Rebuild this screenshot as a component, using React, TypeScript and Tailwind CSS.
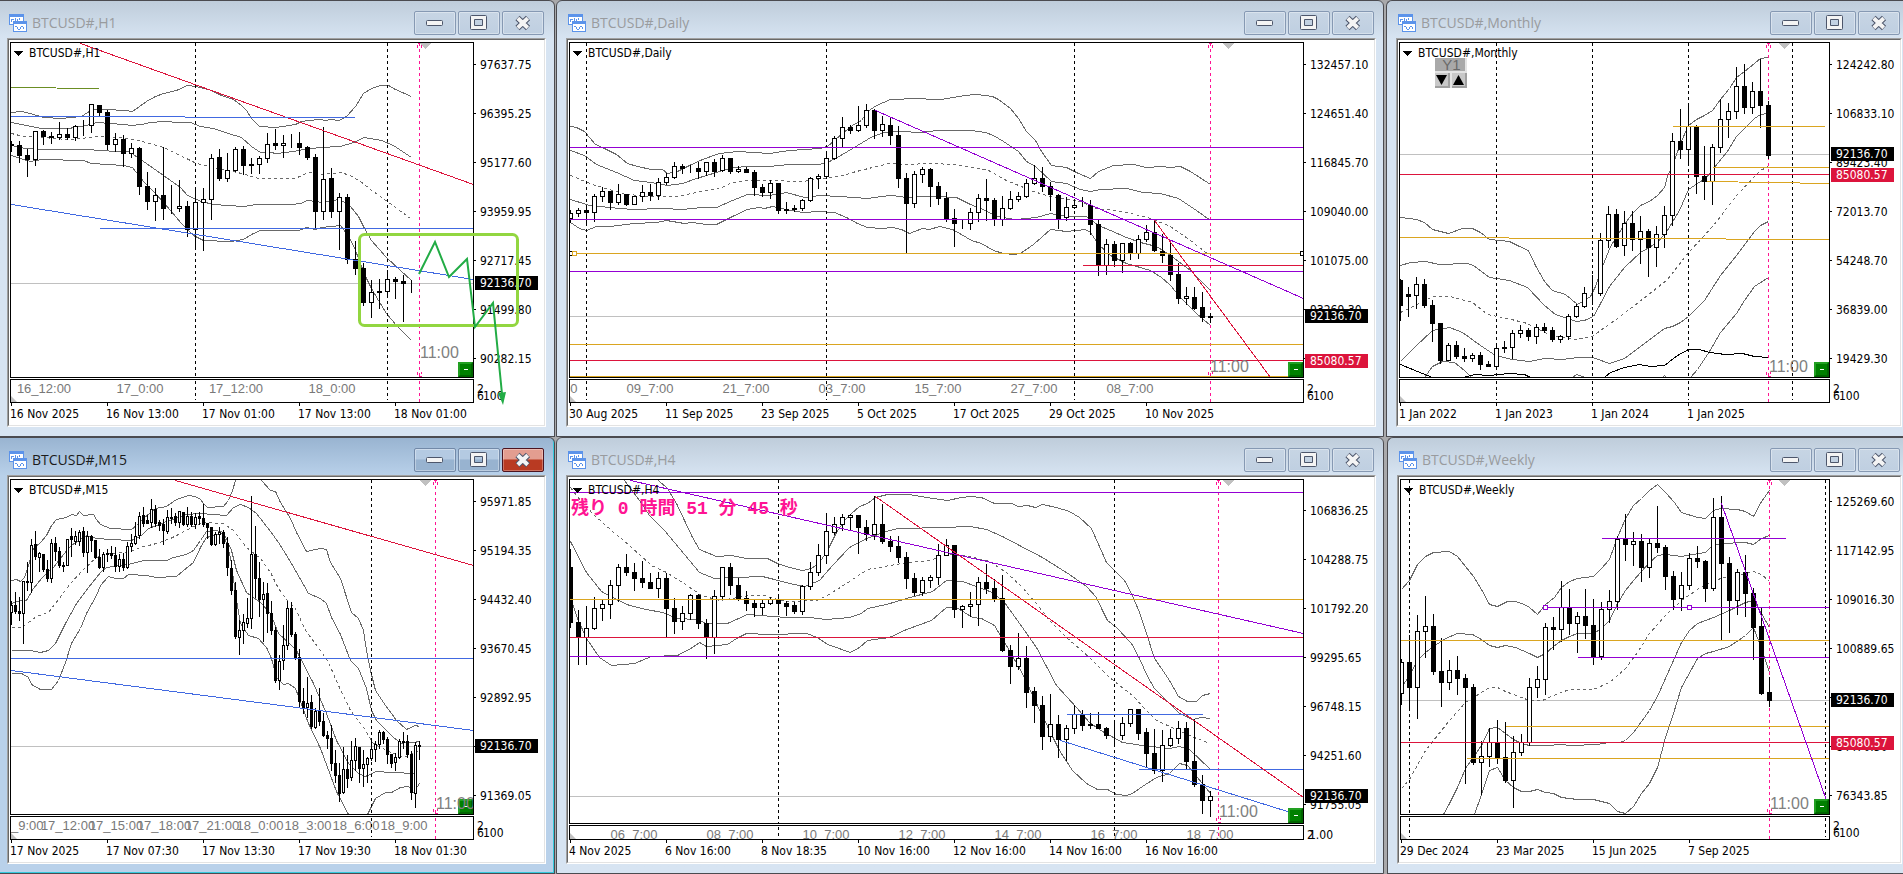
import React from "react";

// kind (1 = hollow, 0 = filled), body top, body bottom, high, low
type Candle = [number, number, number, number, number];

interface Line {
  color: string;
  from: [number, number];
  to: [number, number];
}

interface Chart {
  title: string;
  left: number;
  bottom: number;
  step: number;
  candles: Candle[];
  bands: string[];
  mid: string;
  extra?: string[];
  lines: Line[];
  price: number;
  days: number[];
  now: number;
  shift: number;
  clock: [number, number];
  handles?: [number, number, string][];
  axis: string[];
  level?: number;
  times: string[];
  hours: string[];
}

const PURPLE = "#9400d3";
const GOLD = "#daa520";
const RED = "#dc143c";
const BLUE = "#4169e1";
const OLIVE = "#6b8e23";
const PINK = "#ff1493";

// chart data is kept in thirds of a pixel, measured from the window's corner
const TOP = 129;

const flat = (color: string, y: number, from = 0, to = 2400): Line => ({ color, from: [from, y], to: [to, y] });

const h1: Chart = {
  title: "BTCUSD#,H1",
  left: 33,
  bottom: 1131,
  step: 8,
  candles: [
    [0, 432, 437, 425, 453], [0, 436, 467, 423, 488], [0, 466, 479, 449, 530], [1, 395, 479, 395, 497],
    [0, 393, 410, 390, 434], [0, 408, 412, 397, 431], [1, 403, 413, 366, 418], [0, 403, 413, 385, 419],
    [1, 379, 413, 375, 422], [0, 376, 376, 361, 407], [1, 313, 376, 313, 398], [0, 316, 338, 316, 347],
    [0, 336, 434, 332, 449], [1, 418, 434, 399, 455], [0, 417, 461, 405, 498], [1, 445, 461, 430, 473],
    [0, 444, 559, 441, 584], [0, 559, 605, 516, 627], [1, 586, 605, 564, 660], [0, 586, 626, 441, 657],
    [0, 626, 626, 555, 640], [1, 619, 626, 540, 635], [0, 619, 689, 603, 708], [1, 607, 689, 570, 748],
    [1, 598, 607, 564, 752], [1, 475, 599, 462, 659], [0, 472, 536, 447, 542], [1, 511, 536, 459, 545],
    [1, 448, 512, 441, 515], [0, 447, 497, 438, 524], [0, 493, 496, 474, 521], [1, 475, 494, 468, 521],
    [1, 433, 476, 401, 486], [0, 430, 437, 387, 449], [1, 430, 437, 405, 473], [0, 430, 430, 402, 443],
    [0, 430, 443, 396, 464], [0, 441, 473, 438, 479], [0, 472, 635, 462, 681], [1, 538, 635, 381, 659],
    [0, 535, 635, 506, 653], [1, 592, 635, 579, 747], [0, 592, 779, 583, 791], [0, 777, 806, 723, 822],
    [0, 804, 908, 789, 917], [1, 877, 908, 841, 953], [0, 874, 878, 837, 926], [1, 838, 875, 812, 888],
    [0, 837, 845, 833, 896], [0, 844, 851, 825, 965], [0, 850, 850, 842, 878],
  ],
  bands: [
    "33,337 65,334 90,340 130,351 185,355 215,353 245,350 262,336 280,329 320,327 375,331 398,333 418,320 440,303 465,290 490,280 530,272 563,256 590,260 635,270 665,285 700,299 725,315 740,330 755,355 778,379 825,382 868,376 885,373 905,365 925,360 960,358 975,361 990,358 1018,361 1042,345 1065,320 1090,281 1115,264 1140,256 1165,257 1185,268 1233,288",
    "33,367 80,375 125,384 205,386 240,378 270,372 290,366 330,370 370,374 395,377 425,372 450,366 490,364 540,366 572,367 600,378 640,386 685,400 725,413 755,438 780,456 810,457 830,461 880,455 910,447 960,442 1020,440 1060,428 1093,411 1145,422 1180,436 1233,473",
    "33,436 75,446 130,449 260,449 350,454 385,455 400,462 440,490 490,527 540,563 563,585 605,603 640,612 730,620 770,614 870,613 905,610 920,602 950,603 965,606 1015,597 1030,604 1050,620 1075,650 1090,680 1115,720 1160,772 1200,812 1235,840",
    "33,465 60,474 90,485 125,479 250,482 275,491 370,496 398,503 430,545 465,580 510,630 545,670 580,705 610,720 690,725 730,718 755,702 780,690 860,691 895,692 920,683 945,688 965,682 1020,677 1040,700 1060,735 1080,790 1095,830 1115,865 1135,900 1160,940 1190,975 1233,1022",
  ],
  mid: "33,400 70,408 130,412 200,418 245,414 290,409 355,412 415,422 490,443 560,475 590,490 640,502 700,515 735,522 775,534 870,536 885,535 910,522 925,518 965,522 1020,516 1050,526 1080,545 1110,568 1140,588 1175,612 1230,655",
  lines: [
    { color: RED, from: [240, 129], to: [1420, 552] },
    { color: OLIVE, from: [33, 262], to: [297, 266] },
    { color: BLUE, from: [33, 349], to: [1065, 353] },
    flat(BLUE, 685, 297),
    { color: BLUE, from: [33, 613], to: [1420, 838] },
  ],
  price: 850,
  days: [587, 1163],
  now: 1258,
  shift: 1277,
  clock: [1260, 1075],
  axis: ["97637.75", "96395.25", "95177.60", "93959.95", "92717.45", "91499.80", "90282.15"],
  times: ["16 Nov 2025", "16 Nov 13:00", "17 Nov 01:00", "17 Nov 13:00", "18 Nov 01:00"],
  hours: ["16_12:00", "17_0:00", "17_12:00", "18_0:00"],
};

const daily: Chart = {
  title: "BTCUSD#,Daily",
  left: 42,
  bottom: 1131,
  step: 8,
  candles: [
    [1, 640, 655, 632, 667], [1, 631, 641, 624, 650], [0, 630, 638, 616, 670], [1, 589, 637, 583, 665],
    [1, 574, 589, 561, 604], [0, 573, 608, 573, 629], [1, 583, 608, 552, 613], [0, 583, 614, 583, 617],
    [1, 589, 613, 589, 613], [1, 577, 589, 557, 605], [0, 576, 587, 552, 602], [1, 547, 587, 534, 598],
    [1, 532, 547, 520, 552], [1, 500, 532, 488, 534], [0, 498, 506, 494, 520], [0, 506, 506, 497, 517],
    [0, 504, 515, 488, 534], [1, 487, 515, 487, 525], [0, 486, 513, 477, 528], [1, 475, 512, 465, 515],
    [0, 474, 515, 474, 520], [1, 508, 515, 499, 518], [0, 507, 517, 503, 518], [0, 516, 563, 511, 587],
    [0, 562, 578, 553, 590], [1, 549, 577, 540, 596], [0, 549, 632, 549, 641], [0, 628, 632, 607, 641],
    [0, 624, 629, 617, 633], [1, 601, 626, 598, 631], [1, 535, 601, 532, 605], [1, 529, 535, 524, 566],
    [1, 475, 529, 460, 536], [1, 415, 475, 408, 478], [1, 382, 415, 353, 443], [0, 381, 392, 376, 401],
    [1, 376, 392, 318, 395], [1, 331, 376, 312, 382], [0, 330, 392, 327, 416], [1, 373, 392, 349, 409],
    [0, 375, 407, 356, 434], [0, 405, 536, 378, 563], [0, 535, 611, 519, 760], [1, 523, 611, 514, 622],
    [1, 508, 523, 502, 548], [0, 507, 560, 504, 620], [0, 559, 596, 547, 614], [0, 595, 656, 576, 665],
    [0, 655, 671, 628, 738], [0, 671, 671, 661, 686], [1, 637, 671, 625, 689], [1, 595, 637, 583, 665],
    [0, 595, 601, 538, 662], [0, 601, 658, 595, 677], [1, 625, 658, 589, 677], [1, 598, 625, 574, 628],
    [1, 590, 598, 578, 604], [1, 550, 590, 538, 592], [1, 535, 550, 495, 552], [0, 535, 559, 501, 575],
    [0, 559, 584, 547, 632], [0, 585, 656, 583, 686], [1, 622, 652, 592, 662], [1, 616, 622, 598, 626],
    [0, 616, 616, 592, 620], [0, 615, 674, 600, 704], [0, 673, 796, 662, 825], [1, 733, 796, 717, 822],
    [0, 733, 782, 724, 798], [1, 731, 782, 731, 818], [0, 730, 761, 727, 777], [1, 718, 761, 706, 776],
    [1, 697, 718, 675, 725], [0, 697, 752, 660, 755], [0, 753, 767, 703, 788], [0, 766, 824, 724, 840],
    [0, 822, 896, 791, 911], [1, 889, 895, 861, 914], [0, 892, 926, 863, 928], [0, 922, 953, 876, 965],
    [0, 948, 952, 939, 968],
  ],
  bands: [
    "43,380 60,382 85,394 100,413 117,434 145,446 180,463 215,489 245,500 285,507 320,508 333,520 365,514 400,495 440,477 490,460 545,455 640,460 700,451 790,445 815,439 860,400 890,376 915,360 935,335 960,315 1003,298 1030,298 1060,295 1155,298 1225,285 1260,283 1310,288 1327,297 1362,326 1387,356 1412,393 1437,420 1457,455 1485,497 1532,502 1567,519 1602,535 1627,515 1672,497 1732,494 1772,501 1817,499 1842,502 1872,499 1902,515 1962,553",
    "43,450 85,465 120,493 180,518 235,541 285,548 335,556 380,549 420,535 480,518 530,503 580,499 640,498 700,494 790,492 820,484 860,462 890,446 920,428 950,410 985,398 1040,393 1090,397 1145,392 1245,391 1287,397 1312,405 1342,425 1387,455 1412,483 1437,500 1485,545 1532,550 1572,567 1602,574 1632,569 1712,565 1762,576 1812,580 1867,596 1922,630 1962,660",
    "43,598 100,617 160,623 230,628 320,624 380,628 440,622 480,621 530,601 575,584 640,585 690,578 745,592 790,585 850,590 935,596 1000,586 1035,588 1050,594 1085,588 1145,590 1200,593 1242,612 1287,632 1322,648 1377,658 1442,652 1482,641 1532,648 1592,650 1627,677 1662,692 1712,712 1752,727 1802,740 1842,765 1902,810 1962,872",
    "43,668 70,684 92,690 120,679 160,679 235,671 300,668 330,662 385,670 410,667 450,674 480,673 500,665 530,650 575,628 610,622 625,625 650,618 690,627 740,637 790,634 835,637 870,653 905,669 935,682 980,685 1010,683 1035,688 1060,699 1100,685 1120,688 1150,678 1190,689 1215,703 1245,720 1277,731 1312,750 1342,760 1372,764 1392,760 1432,733 1482,688 1532,695 1587,688 1604,697 1627,733 1662,765 1712,790 1782,812 1817,832 1842,855 1872,893 1922,940 1962,977",
  ],
  mid: "43,526 110,553 190,577 260,588 360,589 420,576 490,566 530,548 575,541 640,540 740,545 800,535 850,530 890,517 960,500 1000,490 1045,493 1130,490 1190,492 1242,502 1297,510 1352,540 1432,573 1492,592 1572,603 1622,625 1702,635 1782,655 1842,678 1902,720 1957,762",
  lines: [
    flat(PURPLE, 442),
    flat(PURPLE, 658),
    flat(GOLD, 760),
    flat(PURPLE, 814),
    flat(GOLD, 1033),
    flat(RED, 1081),
    flat(GOLD, 1130),
    flat(RED, 796, 1580),
    { color: PURPLE, from: [957, 330], to: [2242, 895] },
    { color: RED, from: [1796, 661], to: [2142, 1131] },
  ],
  price: 949,
  days: [92, 812, 1556],
  now: 1964,
  shift: 2017,
  clock: [1964, 1118],
  handles: [[44, 760, "#000"], [56, 760, GOLD], [2239, 760, "#000"]],
  axis: ["132457.10", "124651.40", "116845.70", "109040.00", "101075.00", "93269.30", "85463.60"],
  level: 1083,
  times: ["30 Aug 2025", "11 Sep 2025", "23 Sep 2025", "5 Oct 2025", "17 Oct 2025", "29 Oct 2025", "10 Nov 2025"],
  hours: ["28_7:00", "09_7:00", "21_7:00", "03_7:00", "15_7:00", "27_7:00", "08_7:00"],
};

const monthly: Chart = {
  title: "BTCUSD#,Monthly",
  left: 48,
  bottom: 1131,
  step: 8,
  candles: [
    [0, 840, 917, 837, 962], [0, 883, 889, 861, 950], [1, 853, 886, 831, 926], [0, 853, 916, 837, 923],
    [0, 915, 971, 900, 1025], [0, 969, 1082, 969, 1091], [1, 1037, 1081, 1029, 1081], [0, 1036, 1070, 1024, 1074],
    [0, 1069, 1076, 1045, 1085], [1, 1067, 1076, 1060, 1085], [0, 1066, 1093, 1056, 1109], [0, 1092, 1100, 1083, 1100],
    [1, 1046, 1099, 1032, 1104], [0, 1042, 1046, 1023, 1058], [1, 1000, 1043, 991, 1074], [1, 991, 1000, 976, 1013],
    [0, 990, 1010, 985, 1022], [1, 982, 1010, 974, 1031], [0, 981, 991, 969, 996], [0, 990, 1019, 982, 1025],
    [1, 1010, 1018, 1005, 1028], [1, 949, 1010, 943, 1017], [1, 920, 949, 912, 953], [1, 881, 920, 861, 923],
    [0, 880, 880, 827, 913], [1, 721, 880, 699, 886], [1, 643, 721, 618, 742], [0, 643, 738, 628, 741],
    [1, 670, 737, 634, 765], [0, 670, 719, 634, 750], [1, 694, 718, 649, 789], [0, 694, 743, 688, 828],
    [1, 704, 742, 679, 798], [1, 647, 704, 618, 743], [1, 424, 647, 400, 677], [0, 424, 449, 327, 476],
    [1, 379, 449, 318, 491], [0, 379, 529, 375, 581], [0, 529, 545, 438, 597], [1, 442, 545, 433, 614],
    [1, 358, 442, 297, 456], [1, 335, 358, 310, 413], [1, 259, 334, 201, 356], [0, 259, 323, 192, 339],
    [1, 275, 322, 247, 339], [0, 274, 317, 178, 381], [0, 316, 465, 304, 474],
  ],
  bands: [
    "50,652 98,658 120,668 145,687 193,700 235,686 265,686 290,698 315,718 375,723 405,739 433,752 455,795 480,843 505,870 545,882 580,914 600,900 620,890 635,860 655,800 680,740 720,673 745,640 770,616 795,603 820,585 842,563 850,530 870,480 890,430 914,376 938,358 960,347 985,330 1010,298 1035,265 1058,232 1082,213 1110,190 1130,175 1154,171",
    "50,797 80,787 125,784 165,792 250,791 268,796 315,831 375,840 430,862 480,916 515,942 540,952 578,964 600,960 628,948 645,915 675,858 720,802 770,757 820,727 850,690 885,630 914,568 940,550 965,535 1000,490 1030,455 1058,410 1082,385 1110,355 1130,343 1154,340",
    "50,1083 90,1042 145,992 195,982 235,997 290,1036 335,1065 385,1077 435,1084 480,1075 535,1079 580,1072 625,1073 675,1090 720,1075 780,1030 840,986 865,980 890,968 914,948 960,900 1010,825 1058,765 1110,695 1130,677 1154,665",
    "122,1131 145,1099 175,1083 210,1086 240,1110 262,1131",
    "565,1131 578,1124 605,1131",
    "835,1131 842,1127 848,1131",
    "918,1131 940,1108 975,1053 1010,998 1058,940 1080,900 1110,860 1154,832",
  ],
  mid: "50,938 95,915 145,890 200,889 265,907 310,942 370,954 430,970 480,997 520,1008 575,1018 625,1010 650,990 700,955 790,885 850,838 914,757 960,705 1000,660 1058,585 1130,510 1154,498",
  extra: [
    "50,1092 100,1114 145,1131",
    "237,1131 270,1124 315,1126 375,1119 420,1124 440,1131",
    "662,1131 680,1118 720,1102 765,1093 800,1100 842,1096 880,1065 914,1048 945,1049 975,1056 1025,1062 1075,1061 1110,1068 1154,1073",
  ],
  lines: [
    flat(GOLD, 379, 864, 1320),
    flat(GOLD, 502, 986),
    { color: GOLD, from: [970, 544], to: [1340, 550] },
    { color: GOLD, from: [48, 712], to: [1340, 718] },
    flat(RED, 523),
  ],
  price: 463,
  days: [338, 626, 914, 1226],
  now: 1154,
  shift: 1202,
  clock: [1155, 1118],
  axis: ["124242.80", "106833.10", "89423.40", "72013.70", "54248.70", "36839.00", "19429.30"],
  level: 525,
  times: ["1 Jan 2022", "1 Jan 2023", "1 Jan 2024", "1 Jan 2025"],
  hours: [],
};

const m15: Chart = {
  title: "BTCUSD#,M15",
  left: 33,
  bottom: 1131,
  step: 4,
  candles: [
    [1, 505, 525, 492, 563], [0, 505, 523, 465, 530], [0, 523, 529, 480, 550], [1, 433, 529, 433, 620],
    [0, 433, 436, 376, 460], [1, 325, 436, 306, 467], [0, 321, 359, 283, 367], [1, 349, 361, 346, 402],
    [0, 352, 397, 352, 402], [0, 397, 424, 370, 434], [1, 319, 424, 307, 437], [0, 319, 344, 300, 370],
    [0, 344, 386, 330, 390], [0, 384, 387, 376, 402], [1, 307, 385, 307, 385], [0, 297, 307, 273, 358],
    [1, 297, 312, 283, 322], [1, 285, 313, 280, 325], [0, 283, 346, 271, 358], [1, 298, 346, 284, 405],
    [0, 297, 310, 294, 343], [0, 309, 361, 309, 363], [0, 361, 391, 338, 395], [1, 352, 391, 346, 402],
    [1, 349, 353, 336, 372], [0, 349, 356, 327, 363], [0, 354, 389, 330, 402], [1, 367, 388, 352, 402],
    [0, 367, 392, 349, 400], [1, 328, 392, 316, 395], [1, 319, 328, 291, 343], [1, 297, 318, 257, 323],
    [1, 239, 296, 225, 305], [0, 234, 258, 210, 268], [0, 249, 258, 234, 260], [1, 217, 257, 186, 270],
    [0, 217, 259, 205, 268], [0, 257, 265, 250, 280], [0, 262, 281, 248, 323], [1, 241, 283, 220, 290],
    [1, 240, 245, 213, 260], [0, 237, 257, 228, 265], [1, 223, 257, 222, 270], [0, 225, 262, 225, 265],
    [1, 239, 262, 210, 268], [0, 239, 262, 225, 268], [1, 240, 262, 228, 275], [0, 238, 244, 225, 262],
    [0, 244, 262, 201, 268], [0, 258, 272, 258, 305], [0, 271, 323, 271, 325], [1, 292, 322, 286, 325],
    [1, 286, 292, 270, 320], [0, 286, 318, 280, 332], [0, 318, 392, 300, 416], [0, 393, 461, 370, 473],
    [0, 460, 599, 436, 603], [1, 580, 602, 550, 653], [1, 556, 580, 533, 620], [1, 545, 558, 485, 570],
    [1, 352, 544, 178, 575], [0, 352, 424, 268, 482], [0, 424, 487, 375, 538], [1, 472, 487, 436, 612],
    [0, 469, 530, 438, 585], [0, 529, 581, 492, 592], [0, 580, 731, 570, 735], [1, 672, 731, 655, 758],
    [1, 626, 670, 564, 697], [1, 514, 626, 492, 638], [0, 513, 593, 495, 599], [0, 592, 661, 585, 668],
    [0, 661, 794, 637, 811], [0, 793, 811, 755, 830], [1, 799, 812, 722, 842], [0, 796, 869, 775, 873],
    [1, 823, 871, 815, 875], [0, 822, 854, 754, 865], [0, 852, 896, 829, 899], [0, 896, 905, 883, 935],
    [0, 904, 980, 864, 1001], [0, 978, 1016, 940, 1035], [0, 1015, 1070, 980, 1092], [1, 997, 1067, 930, 1070],
    [0, 997, 1024, 955, 1050], [1, 970, 1021, 912, 1030], [1, 929, 970, 903, 1000], [0, 931, 994, 931, 1037],
    [1, 983, 994, 940, 1048], [1, 964, 983, 961, 1037], [1, 937, 964, 910, 970], [1, 922, 937, 912, 973],
    [1, 885, 922, 879, 935], [0, 885, 908, 882, 920], [0, 907, 952, 900, 978], [0, 952, 980, 952, 990],
    [1, 961, 977, 948, 1000], [1, 914, 961, 908, 965], [0, 912, 917, 886, 935], [0, 912, 953, 895, 960],
    [0, 952, 1067, 942, 1086], [1, 925, 1070, 915, 1110], [0, 925, 929, 912, 968],
  ],
  bands: [
    "33,430 50,427 60,433 72,420 85,385 100,335 120,315 140,296 155,265 170,247 200,241 215,231 230,234 238,224 250,234 280,233 290,247 300,262 330,273 395,277 410,265 430,245 450,225 467,214 500,208 530,188 565,175 585,178 600,187 610,200 622,210 670,208 685,190 697,160 705,129",
    "783,129 810,160 825,163 840,195 870,245 890,285 920,343 945,337 960,335 980,338 990,375 1020,425 1053,525 1075,545 1090,580 1100,640 1110,700 1125,760 1155,805 1175,830 1190,850 1220,877 1245,866 1257,868",
    "33,500 60,490 80,490 100,455 125,425 145,402 160,390 190,352 215,325 235,310 260,295 290,305 330,308 395,310 420,298 445,275 470,265 500,252 525,245 560,232 600,230 680,235 700,210 720,203 745,212 770,230 810,283 835,315 850,340 875,380 925,468 960,483 980,500 995,540 1020,593 1050,670 1075,695 1100,755 1115,820 1128,850 1150,870 1180,900 1205,918 1220,915 1240,915 1257,913",
    "33,640 90,640 120,646 145,640 165,620 195,560 230,500 265,450 300,405 320,390 385,383 430,371 500,370 520,362 560,352 580,340 600,310 620,282 650,280 670,285 695,340 710,400 740,465 780,495 810,530 835,590 868,618 890,640 940,740 980,830 1010,910 1045,980 1075,1010 1095,1018 1130,1002 1170,1005 1250,1008",
    "33,708 65,708 85,722 95,742 120,758 155,757 175,730 195,675 215,620 240,575 260,530 290,475 300,445 325,418 345,424 370,424 385,412 440,415 470,422 530,418 550,400 580,375 600,330 620,300 670,290 690,360 705,470 720,560 745,595 775,605 800,630 815,665 830,720 850,742 865,738 885,755 925,860 960,935 1010,1062 1045,1131",
    "1103,1131 1125,1083 1155,1067 1175,1065 1200,1052 1225,1047 1240,1065 1257,1040",
  ],
  mid: "33,570 65,570 85,555 110,538 145,525 175,487 210,440 250,398 290,360 330,348 385,345 420,330 470,318 510,305 540,290 580,268 610,255 670,260 700,280 740,330 780,365 810,405 835,455 860,487 885,515 915,580 960,640 985,675 1015,745 1050,820 1090,870 1120,920 1160,940 1210,960 1257,940",
  lines: [
    { color: RED, from: [525, 129], to: [1420, 386] },
    flat(BLUE, 664),
    { color: BLUE, from: [33, 700], to: [1420, 880] },
  ],
  price: 928,
  days: [1115],
  now: 1307,
  shift: 1277,
  clock: [1310, 1116],
  axis: ["95971.85", "95194.35", "94432.40", "93670.45", "92892.95", "92131.00", "91369.05"],
  times: ["17 Nov 2025", "17 Nov 07:30", "17 Nov 13:30", "17 Nov 19:30", "18 Nov 01:30"],
  hours: ["17_9:00", "17_12:00", "17_15:00", "17_18:00", "17_21:00", "18_0:00", "18_3:00", "18_6:00", "18_9:00"],
};

const h4: Chart = {
  title: "BTCUSD#,H4",
  left: 42,
  bottom: 1158,
  step: 8,
  candles: [
    [0, 390, 557, 336, 572], [0, 556, 602, 519, 683], [1, 574, 601, 507, 681], [1, 514, 574, 481, 578],
    [1, 503, 514, 489, 551], [1, 445, 502, 430, 545], [1, 391, 445, 381, 493], [0, 390, 407, 352, 416],
    [0, 405, 425, 379, 461], [0, 423, 437, 373, 451], [0, 435, 455, 409, 455], [1, 424, 454, 406, 482],
    [0, 423, 515, 409, 602], [0, 513, 554, 484, 590], [1, 529, 553, 507, 578], [1, 475, 529, 472, 547],
    [0, 474, 560, 472, 574], [0, 558, 600, 547, 665], [1, 478, 600, 460, 650], [1, 391, 478, 391, 487],
    [0, 390, 446, 378, 473], [0, 445, 486, 423, 490], [0, 484, 500, 462, 521], [0, 499, 512, 488, 537],
    [1, 499, 511, 490, 532], [1, 487, 499, 480, 503], [0, 486, 500, 475, 530], [0, 498, 507, 492, 536],
    [0, 504, 524, 495, 528], [1, 448, 524, 445, 533], [1, 406, 448, 375, 458], [1, 355, 406, 322, 416],
    [1, 283, 355, 228, 380], [1, 262, 286, 241, 292], [1, 241, 262, 231, 280], [1, 235, 241, 231, 280],
    [0, 234, 272, 234, 348], [0, 270, 291, 249, 311], [1, 262, 292, 178, 308], [0, 262, 314, 201, 320],
    [0, 312, 329, 297, 344], [0, 327, 362, 297, 375], [0, 360, 425, 345, 455], [0, 423, 467, 408, 476],
    [1, 430, 466, 420, 475], [1, 421, 430, 415, 450], [1, 355, 421, 322, 441], [1, 325, 355, 307, 355],
    [0, 324, 517, 324, 542], [1, 509, 517, 505, 572], [1, 502, 508, 465, 537], [1, 436, 502, 421, 566],
    [0, 435, 455, 382, 470], [0, 453, 486, 426, 494], [0, 484, 641, 414, 644], [0, 640, 689, 624, 738],
    [1, 664, 688, 589, 698], [0, 663, 765, 627, 812], [0, 763, 806, 751, 857], [0, 804, 899, 777, 938],
    [1, 862, 898, 771, 914], [0, 862, 908, 834, 960], [1, 874, 908, 864, 971], [1, 832, 874, 804, 890],
    [0, 832, 866, 819, 879], [0, 862, 866, 828, 875], [0, 862, 875, 827, 875], [0, 874, 896, 870, 905],
    [0, 895, 895, 860, 922], [1, 859, 895, 840, 908], [1, 817, 859, 817, 868], [0, 816, 890, 816, 906],
    [0, 886, 950, 874, 987], [0, 948, 1001, 876, 1010], [1, 925, 1000, 881, 1032], [1, 904, 925, 877, 929],
    [1, 874, 904, 852, 920], [0, 873, 974, 855, 996], [0, 972, 1043, 848, 1048], [0, 1041, 1091, 1014, 1130],
    [1, 1078, 1091, 1062, 1137],
  ],
  bands: [
    "307,129 335,155 360,200 385,250 410,300 430,337 480,358 525,354 570,363 635,364 665,378 700,392 740,401 765,393 790,375 815,340 840,285 865,250 885,230 910,208 935,200 958,182 995,173 1060,172 1110,180 1175,190 1215,181 1242,178 1275,180 1315,199 1365,200 1388,208 1415,205 1437,211 1458,203 1500,211 1540,223 1570,240 1605,275 1650,375 1675,400 1705,430 1730,475 1750,525 1770,590 1795,665 1815,695 1840,730 1867,778 1895,793 1920,793 1940,775 1962,769",
    "205,129 250,190 280,235 325,280 370,335 400,370 430,406 475,423 540,421 620,418 655,426 700,440 745,448 790,430 830,385 880,330 930,303 990,282 1025,274 1175,270 1225,268 1242,268 1290,276 1340,297 1390,325 1460,362 1540,412 1590,447 1620,480 1640,520 1655,550 1680,572 1725,620 1750,665 1775,718 1795,755 1830,790 1870,828 1910,848 1935,841 1962,845",
    "43,312 90,405 135,463 180,488 220,505 270,517 320,525 365,545 420,548 450,558 515,560 540,548 575,533 690,541 760,542 810,547 880,541 915,528 935,514 990,502 1050,484 1130,462 1170,430 1220,433 1260,448 1310,465 1345,495 1400,570 1440,630 1500,745 1560,810 1600,855 1640,882 1700,915 1760,925 1840,935 1870,928 1900,938 1962,997",
    "43,480 65,545 90,605 130,660 165,685 235,680 285,657 365,656 410,630 430,615 450,627 515,622 540,605 570,589 640,592 750,590 785,600 815,622 883,646 910,632 935,609 1000,602 1050,578 1125,550 1170,512 1200,510 1250,540 1275,545 1315,565 1350,625 1400,710 1440,800 1480,880 1510,940 1550,1000 1590,1038 1625,1057 1655,1057 1680,1071 1710,1076 1730,1070 1760,1048 1800,1022 1840,1008 1870,978 1895,985 1925,1020 1962,1070",
  ],
  mid: "43,150 60,175 110,230 165,280 220,325 285,385 330,405 380,435 435,475 490,491 530,485 580,475 625,476 665,487 700,493 780,491 815,475 870,440 935,398 985,388 1055,377 1120,370 1170,352 1242,358 1300,373 1350,405 1400,450 1440,498 1480,550 1530,600 1600,660 1660,722 1730,775 1770,820 1800,850 1860,877 1920,903 1962,920",
  lines: [
    flat(PURPLE, 166),
    flat(GOLD, 487),
    flat(RED, 601),
    flat(PURPLE, 658),
    flat(BLUE, 832, 1532, 1938),
    flat(BLUE, 997, 1746),
    { color: BLUE, from: [1514, 909], to: [2242, 1137] },
    { color: PURPLE, from: [222, 129], to: [2242, 589] },
    { color: RED, from: [957, 178], to: [2242, 1080] },
  ],
  price: 1078,
  days: [668, 1676],
  now: 1988,
  shift: 2017,
  clock: [1990, 1142],
  axis: ["106836.25", "104288.75", "101792.20", "99295.65", "96748.15", "94251.60", "91755.05"],
  times: ["4 Nov 2025", "6 Nov 16:00", "8 Nov 18:35", "10 Nov 16:00", "12 Nov 16:00", "14 Nov 16:00", "16 Nov 16:00"],
  hours: ["06_7:00", "08_7:00", "10_7:00", "12_7:00", "14_7:00", "16_7:00", "18_7:00"],
};

const weekly: Chart = {
  title: "BTCUSD#,Weekly",
  left: 51,
  bottom: 1131,
  step: 8,
  candles: [
    [1, 676, 770, 666, 803], [0, 676, 751, 596, 818], [1, 583, 751, 534, 843], [1, 568, 583, 477, 660],
    [0, 568, 703, 531, 713], [0, 703, 737, 603, 809], [1, 700, 737, 669, 758], [0, 699, 725, 657, 771],
    [0, 724, 752, 711, 1040], [0, 751, 976, 742, 983], [1, 958, 976, 912, 1071], [1, 916, 958, 873, 989],
    [0, 916, 962, 849, 980], [0, 961, 1031, 855, 1037], [1, 946, 1031, 898, 1110], [1, 916, 946, 891, 956],
    [1, 751, 916, 723, 926], [1, 727, 751, 687, 780], [1, 571, 727, 558, 771], [0, 570, 578, 541, 638],
    [1, 511, 577, 432, 614], [0, 511, 560, 457, 593], [1, 538, 560, 526, 645], [0, 538, 565, 457, 603],
    [0, 565, 660, 487, 683], [1, 517, 659, 496, 668], [1, 493, 517, 459, 557], [1, 307, 493, 298, 516],
    [0, 306, 323, 231, 369], [1, 314, 322, 285, 386], [0, 313, 392, 291, 434], [1, 319, 391, 307, 422],
    [0, 319, 331, 207, 347], [0, 330, 419, 325, 458], [0, 418, 486, 403, 518], [1, 445, 485, 407, 521],
    [1, 364, 445, 349, 458], [0, 364, 374, 327, 392], [0, 373, 455, 370, 494], [1, 241, 455, 183, 459],
    [0, 241, 380, 178, 608], [0, 379, 491, 361, 587], [1, 406, 490, 397, 531], [0, 406, 470, 355, 537],
    [0, 468, 570, 455, 668], [0, 568, 768, 515, 771], [0, 766, 791, 720, 808],
  ],
  bands: [
    "53,457 77,430 101,382 125,357 149,346 197,343 221,358 245,387 269,417 293,456 317,501 341,508 370,492 395,494 420,502 437,510 460,532 485,503 510,480 533,452 557,433 581,424 629,418 653,395 677,367 701,300 725,245 749,205 773,185 797,160 821,142 845,165 870,195 893,225 940,240 965,244 989,220 1010,215 1060,217 1085,224 1109,238 1133,192 1157,160",
    "53,750 77,715 101,670 125,645 149,628 185,605 221,588 265,592 293,608 317,626 341,631 365,625 395,630 437,650 461,661 485,650 509,627 533,610 557,597 581,588 629,590 653,575 677,550 701,500 725,460 749,430 773,402 797,375 821,356 845,352 893,358 965,347 989,323 1035,319 1060,316 1085,317 1109,322 1133,303 1157,295",
    "177,1131 197,1100 221,1050 245,993 265,965 293,925 317,875 341,870 365,890 389,908 413,920 437,926 490,926 530,922 560,925 640,921 677,917 705,916 725,910 749,885 797,820 821,778 845,725 893,616 917,580 941,558 989,540 1037,521 1085,497 1109,490 1133,530 1157,570",
    "270,1131 293,1071 317,1000 341,992 365,1030 389,1052 413,1063 437,1062 461,1056 485,1065 509,1068 533,1080 580,1087 629,1088 677,1098 701,1122 725,1129 749,1108 773,1070 797,1040 821,990 845,900 869,830 893,750 941,664 965,650 989,643 1037,627 1085,596 1109,572 1133,635 1157,707",
  ],
  mid: "53,1055 77,1027 125,940 197,850 245,795 293,765 317,751 341,752 365,762 413,780 437,790 475,790 509,775 557,757 629,756 677,735 725,695 760,645 797,590 845,535 893,490 941,456 989,430 1035,417 1085,408 1109,403 1133,412 1157,432",
  lines: [
    flat(PURPLE, 304, 651, 1203),
    flat(PURPLE, 511, 485),
    flat(GOLD, 610),
    flat(PURPLE, 661, 580),
    flat(GOLD, 868, 365),
    flat(RED, 916),
    flat(GOLD, 964, 246),
    { color: PURPLE, from: [1013, 200], to: [1327, 1090] },
  ],
  price: 790,
  days: [77, 1325],
  now: 1157,
  shift: 1202,
  clock: [1158, 1116],
  handles: [[485, 511, PURPLE], [917, 511, PURPLE]],
  axis: ["125269.60", "117142.95", "109016.30", "100889.65", "92763.00", "84470.50", "76343.85"],
  level: 918,
  times: ["29 Dec 2024", "23 Mar 2025", "15 Jun 2025", "7 Sep 2025"],
  hours: [],
};

const ChartIcon = () => (
  <svg width="18" height="18" viewBox="0 0 18 18" shapeRendering="crispEdges" className="shrink-0" aria-hidden="true">
    <rect x="0.5" y="0.5" width="14" height="10" fill="#fff" stroke="#5b93ea" />
    <rect x="0" y="0" width="15" height="3" fill="#5b93ea" />
    <path d="M2.5 8V5.5H4.5M6.5 4V6.5M8.5 5V7M10.5 4V6" stroke="#5b93ea" fill="none" />
    <rect x="4.5" y="7.5" width="13" height="10" fill="#fff" stroke="#5b93ea" />
    <rect x="4" y="7" width="14" height="3" fill="#5b93ea" />
    <path d="M6 12.5H7.5L9.5 15.5H10.5L12.5 12.5H13.5L15.5 15.5" stroke="#5b93ea" fill="none" />
  </svg>
);

const MinIcon = () => (
  <svg width="18" height="8" viewBox="0 0 18 8" aria-hidden="true">
    <rect x="0.5" y="1.5" width="16" height="5" rx="1" fill="#f4f4f4" stroke="#4d566b" />
  </svg>
);

const MaxIcon = () => (
  <svg width="18" height="16" viewBox="0 0 18 16" aria-hidden="true">
    <path fillRule="evenodd" d="M1.5 0.5H15.5Q16.5 0.5 16.5 1.5V13.5Q16.5 14.5 15.5 14.5H1.5Q0.5 14.5 0.5 13.5V1.5Q0.5 0.5 1.5 0.5ZM4.5 4.5V10.5H12.5V4.5Z" fill="#f4f4f4" stroke="#4d566b" />
  </svg>
);

const CloseIcon = () => (
  <svg width="18" height="16" viewBox="0 0 18 16" aria-hidden="true">
    <path d="M3.5 3L14 13M14 3L3.5 13" stroke="#4d566b" strokeWidth="6" />
    <path d="M3.8 3.3L13.7 12.7M13.7 3.3L3.8 12.7" stroke="#f4f4f4" strokeWidth="4" />
  </svg>
);

const Plot = ({ chart }: { chart: Chart }) => {
  const x = (v: number) => Math.floor((v - chart.left) / 3);
  const y = (v: number) => Math.floor((v - TOP) / 3);
  const path = (points: string) =>
    points
      .split(" ")
      .map((p) => {
        const [a, b] = p.split(",").map(Number);
        return `${x(a) + 0.5},${y(b) + 0.5}`;
      })
      .join(" ");
  const height = y(chart.bottom);
  const half = chart.step === 8 ? 2 : 1;
  const nowX = x(chart.now) + 0.5;
  const shiftX = x(chart.shift) + 0.5;

  return (
    <svg width="100%" height={height} className="block" shapeRendering="crispEdges">
      <line x1="0" x2="100%" y1={y(chart.price) + 0.5} y2={y(chart.price) + 0.5} stroke="#c0c0c0" />
      {chart.bands.map((band) => (
        <polyline key={band} points={path(band)} fill="none" stroke="#696969" />
      ))}
      <polyline points={path(chart.mid)} fill="none" stroke="#696969" strokeDasharray="3 3" />
      {chart.extra?.map((line) => (
        <polyline key={line} points={path(line)} fill="none" stroke="#000" />
      ))}
      {chart.days.map((day) => (
        <line key={day} x1={x(day) + 0.5} x2={x(day) + 0.5} y1="0" y2={height} stroke="#000" strokeDasharray="3 3" />
      ))}
      <line x1={nowX} x2={nowX} y1="0" y2={height} stroke={PINK} strokeDasharray="3 3" />
      <path d={`M${nowX - 2} 5V0.5H${nowX + 2}V5`} fill="none" stroke={PINK} strokeDasharray="3 2" />
      <path d={`M${nowX - 2} ${height - 5}V${height - 1}H${nowX + 2}V${height - 5}`} fill="none" stroke={PINK} strokeDasharray="3 2" />
      {chart.candles.map(([hollow, top, bottom, high, low], i) => {
        const cx = i * chart.step;
        return (
          <g key={i}>
            <line x1={cx + 0.5} x2={cx + 0.5} y1={y(high)} y2={y(low) + 1} stroke="#000" />
            <rect
              x={cx - half + 0.5}
              y={y(top) + 0.5}
              width={half * 2}
              height={y(bottom) - y(top)}
              fill={hollow ? "#fff" : "#000"}
              stroke="#000"
            />
          </g>
        );
      })}
      {chart.lines.map((line, i) => (
        <line
          key={i}
          x1={x(line.from[0]) + 0.5}
          y1={y(line.from[1]) + 0.5}
          x2={x(line.to[0]) + 0.5}
          y2={y(line.to[1]) + 0.5}
          stroke={line.color}
        />
      ))}
      <path d={`M${shiftX - 6} 0H${shiftX + 6}L${shiftX} 6Z`} fill="#c0c0c0" />
      {chart.handles?.map(([hx, hy, color]) => (
        <rect key={hx} x={x(hx) - 1.5} y={y(hy) - 1.5} width="4" height="4" fill="#fff" stroke={color} />
      ))}
      <path d="M3 8H12L7.5 13Z" fill="#000" />
      <text x="18" y="14" fontSize="12">{chart.title}</text>
    </svg>
  );
};

const Indicator = ({ chart, offset, cell }: { chart: Chart; offset: string; cell: string }) => {
  const x = (v: number) => Math.floor((v - chart.left) / 3) + 0.5;

  return (
    <div className="relative flex-1 overflow-hidden border border-black">
      <div className={`flex font-['Liberation_Sans',sans-serif] text-[13px] leading-[17px] text-[#787878] ${offset}`}>
        {chart.hours.map((hour) => (
          <span key={hour} className={`flex shrink-0 justify-center whitespace-nowrap ${cell}`}>{hour}</span>
        ))}
      </div>
      <svg className="absolute inset-0 h-full w-full" shapeRendering="crispEdges" aria-hidden="true">
        {chart.days.map((day) => (
          <line key={day} x1={x(day)} x2={x(day)} y1="1" y2="20" stroke="#000" strokeDasharray="3 3" />
        ))}
        <line x1={x(chart.now)} x2={x(chart.now)} y1="1" y2="100%" stroke={PINK} strokeDasharray="3 3" />
      </svg>
      <svg width="6" height="6" className="absolute bottom-0 left-0" aria-hidden="true">
        <path d="M0 0L6 6H0Z" fill="#c0c0c0" />
      </svg>
    </div>
  );
};

const Collapse = () => (
  <button
    type="button"
    aria-label="Collapse panel"
    className="absolute right-0 bottom-0 flex h-[15px] w-[15px] items-center justify-center border-2 border-t-[#22a022] border-r-[#006400] border-b-[#006400] border-l-[#22a022] bg-[#008000]"
  >
    <span className="h-px w-1 bg-white" />
  </button>
);

const PeriodSwitch = () => (
  <div className="absolute top-[15px] left-[35px] w-8 bg-[#e4e4e4]">
    <div className="h-[13px] w-[30px] bg-[#a9a9a9] pl-[3px] text-center font-['Liberation_Sans',sans-serif] text-[15px] leading-[14px] text-[#696969]">
      Y1
    </div>
    <div className="flex gap-[2px] pt-[2px]">
      <button type="button" aria-label="Previous" className="flex h-[15px] w-[15px] items-center justify-center border-r-2 border-b-2 border-[#a0a0a0] bg-[#c8c8c8]">
        <svg width="11" height="10"><path d="M0 0H11L5.5 10Z" /></svg>
      </button>
      <button type="button" aria-label="Next" className="flex h-[15px] w-[15px] items-center justify-center border-r-2 border-b-2 border-[#a0a0a0] bg-[#c8c8c8]">
        <svg width="11" height="10"><path d="M0 10H11L5.5 0Z" /></svg>
      </button>
    </div>
  </div>
);

const Countdown = () => (
  <p className="absolute top-[17px] left-px font-['Liberation_Mono','Noto_Sans_CJK_JP',monospace] text-[18px] leading-6 font-bold whitespace-pre text-[#ff1493]">
    残り 0 時間 51 分 45 秒
  </p>
);

const Forecast = () => (
  <svg className="pointer-events-none absolute inset-0 h-full w-full" fill="none" aria-hidden="true">
    <rect x="359.5" y="233.5" width="158" height="91" rx="5" stroke="#92d640" strokeWidth="3" />
    <path d="M419 273L435 241L449 276L467 258L475 326L493 302L502 393" stroke="#22ac45" strokeWidth="2" />
    <path d="M498 392L506 391L503 404Z" fill="#22ac45" />
  </svg>
);

interface WindowProps {
  chart: Chart;
  frame: string;
  active?: boolean;
  offset?: string;
  cell?: string;
  overlay?: React.ReactNode;
  children?: React.ReactNode;
}

const ChartWindow = ({ chart, frame, active = false, offset = "ml-0", cell = "w-24", overlay, children }: WindowProps) => {
  const tall = chart.bottom > 1131;
  const button = `flex h-6 w-[42px] items-center justify-center rounded-xs border shadow-[inset_0_0_0_1px_rgba(255,255,255,0.35)] ${
    active
      ? "border-[#7289a8] bg-linear-to-b from-[#b4cae2] from-45% to-[#98b3d0] to-50%"
      : "border-[#8699b3] bg-linear-to-b from-[#c7d5e4] to-[#bfcfe1]"
  }`;
  const close = active
    ? "flex h-6 w-[42px] items-center justify-center rounded-xs border border-[#4d1420] bg-linear-to-b from-[#e39d90] from-45% to-[#b93a22] to-50% shadow-[inset_0_0_0_1px_rgba(255,255,255,0.3)]"
    : button;

  return (
    <section
      className={`relative flex h-[437px] min-w-0 flex-col overflow-hidden border-y border-[#4b4b50] pb-[9px] ${frame} ${
        active
          ? "bg-[#b9d1ea] bg-linear-to-b from-[#99b4d1] to-[#b9d1ea] to-[38px] shadow-[inset_-1px_-1px_0_#35c9dd]"
          : "bg-[#d7e4f2] bg-linear-to-b from-[#bfcddb] to-[#d7e4f2] to-[38px]"
      }`}
    >
      <header className="flex h-[37px] shrink-0 items-start px-[2px]">
        <div className="flex min-w-0 flex-1 items-center gap-[5px] pt-[13px]">
          <ChartIcon />
          <h2
            className={`font-['Open_Sans','Noto_Sans',sans-serif] text-[14px] leading-[18px] ${
              active ? "text-[#1b1b1b]" : "text-[#999b9e]"
            }`}
          >
            {chart.title}
          </h2>
        </div>
        <div className="flex gap-[2px] pt-[10px]">
          <button type="button" aria-label="Minimize" className={button}><MinIcon /></button>
          <button type="button" aria-label="Maximize" className={button}><MaxIcon /></button>
          <button type="button" aria-label="Close" className={close}><CloseIcon /></button>
        </div>
      </header>

      <div className="flex-1 border border-t-[#a0a0a0] border-l-[#a0a0a0] border-r-white border-b-white">
        <div className="flex h-full flex-col border border-t-[#696969] border-l-[#696969] border-r-[#e3e3e3] border-b-[#e3e3e3] bg-white">
          <div className="flex h-[363px]">
            <div className="flex min-w-0 flex-1 flex-col gap-px pt-[2px] pl-px">
              <div className="relative overflow-hidden border border-black">
                <Plot chart={chart} />
                <Collapse />
                <svg className="pointer-events-none absolute inset-0 h-full w-full" aria-hidden="true">
                  <text
                    x={Math.floor((chart.clock[0] - chart.left) / 3)}
                    y={Math.floor((chart.clock[1] - TOP) / 3)}
                    fontSize="16"
                    fill="#808080"
                    className="font-['Liberation_Sans',sans-serif]"
                  >
                    11:00
                  </text>
                </svg>
                {overlay}
              </div>
              <Indicator chart={chart} offset={offset} cell={cell} />
            </div>

            <div className={`relative w-[70px] shrink-0 ${tall ? "pt-[9px]" : ""}`}>
              {chart.axis.map((value) => (
                <div key={value} className="flex h-[49px] items-center gap-1">
                  <span className="h-px w-[2px] bg-black" />
                  <span className="leading-[14px]">{value}</span>
                </div>
              ))}
              {chart.level && (
                <span
                  className="absolute left-px h-[14px] w-[63px] bg-[#dc143c] pl-[5px] leading-[14px] text-white"
                  style={{ top: Math.round(chart.level / 3) - 47 }}
                >
                  85080.57
                </span>
              )}
              <span
                className="absolute left-px h-[14px] w-[63px] bg-black pl-[5px] leading-[14px] text-white"
                style={{ top: Math.round(chart.price / 3) - 47 }}
              >
                92136.70
              </span>
              {tall ? (
                <div className="absolute bottom-[-2px] left-[3px] leading-[14px]">
                  <span className="absolute bottom-0 left-0">2</span>
                  <span className="absolute bottom-0 left-[2px]">1.00</span>
                </div>
              ) : (
                <div className="absolute bottom-0 left-[3px] leading-[14px]">
                  <span className="absolute bottom-[7px] left-0">2</span>
                  <span className="absolute bottom-0 left-0">6</span>
                  <span className="absolute bottom-0 left-[6px]">100</span>
                </div>
              )}
            </div>
          </div>

          <div className="flex overflow-hidden pl-px">
            {chart.times.map((time) => (
              <div key={time} className="w-24 shrink-0 whitespace-nowrap">
                <div className="ml-px h-[3px] w-px bg-black" />
                <div className="leading-4">{time}</div>
              </div>
            ))}
          </div>
        </div>
      </div>
      {children}
    </section>
  );
};

export default function App() {
  return (
    <main className="grid grid-cols-[556fr_830fr_517fr] bg-[#a9a9ab] font-['DejaVu_Sans_Condensed','Noto_Sans',sans-serif] text-[12px] text-black">
      <ChartWindow chart={h1} frame="mr-px border-r pl-[7px] pr-2 rounded-tr-md" offset="-ml-[15px]">
        <Forecast />
      </ChartWindow>
      <ChartWindow chart={daily} frame="mr-[2px] border-x pl-[9px] pr-[7px] rounded-t-md" offset="-ml-[64px]" />
      <ChartWindow chart={monthly} frame="border-l pl-[9px] pr-px rounded-tl-md" overlay={<PeriodSwitch />} />
      <ChartWindow chart={m15} frame="mr-px border-r pl-[7px] pr-2 rounded-tr-md" active offset="-ml-[15px]" cell="w-12" />
      <ChartWindow chart={h4} frame="mr-[2px] border-x pl-[9px] pr-[7px] rounded-t-md" offset="ml-4" overlay={<Countdown />} />
      <ChartWindow chart={weekly} frame="ml-px border-l pl-[9px] pr-px rounded-tl-md" />
    </main>
  );
}
